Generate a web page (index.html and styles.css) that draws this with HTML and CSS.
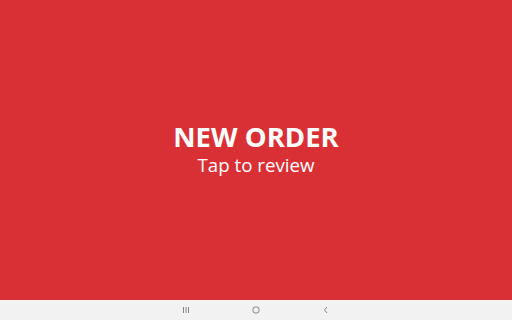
FILE: index.html
```html
<!DOCTYPE html>
<html lang="en">
<head>
    <meta charset="UTF-8">
    <title>New Order</title>
    <link rel="stylesheet" href="styles.css">
</head>
<body>
    <div class="screen">
        <div class="alert">
            <h1 class="title">NEW ORDER</h1>
            <p class="subtitle">Tap to review</p>
        </div>
        <div class="nav-bar">
            <span class="nav-btn">
                <svg width="10" height="10" viewBox="0 0 10 10"><path d="M2.5 2v6M5 2v6M7.5 2v6" stroke="#777" stroke-width="0.9" fill="none"/></svg>
            </span>
            <span class="nav-btn">
                <svg width="10" height="10" viewBox="0 0 10 10"><rect x="2" y="2" width="6" height="6" rx="2.2" stroke="#777" stroke-width="0.9" fill="none"/></svg>
            </span>
            <span class="nav-btn">
                <svg width="10" height="10" viewBox="0 0 10 10"><path d="M6 2L3.5 5L6 8" stroke="#777" stroke-width="0.9" fill="none"/></svg>
            </span>
        </div>
    </div>
</body>
</html>
```

FILE: styles.css
```css
* {
    box-sizing: border-box;
    margin: 0;
    padding: 0;
}

body {
    font-family: "Open Sans", Arial, sans-serif;
    width: 512px;
    height: 320px;
    overflow: hidden;
}

.screen {
    display: flex;
    flex-direction: column;
    height: 320px;
}

.alert {
    flex: 1;
    background-color: #d93036;
    color: #ffffff;
    display: flex;
    flex-direction: column;
    align-items: center;
    justify-content: center;
    padding-bottom: 2px;
}

.title {
    font-size: 27.5px;
    font-weight: 700;
    line-height: 32px;
}

.subtitle {
    font-size: 18.7px;
    line-height: 24px;
}

.nav-bar {
    height: 20px;
    background-color: #f2f2f2;
    display: flex;
    justify-content: center;
    align-items: center;
    gap: 60px;
}

.nav-btn {
    display: flex;
    width: 10px;
    height: 10px;
}
```
